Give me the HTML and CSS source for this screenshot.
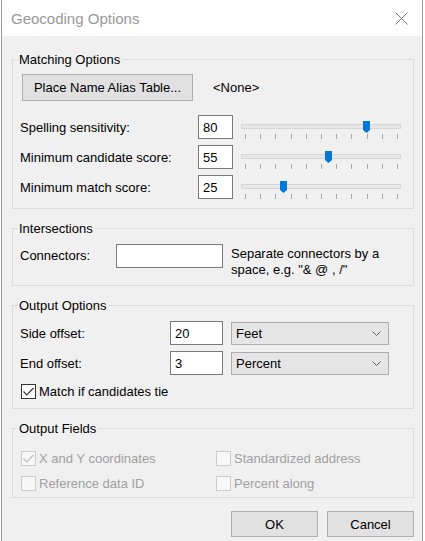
FILE: index.html
```html
<!DOCTYPE html>
<html lang="en">
<head>
  <meta charset="UTF-8" />
  <title>Geocoding Options</title>
  <link rel="stylesheet" href="styles.css">
</head>
<body>

<div class="window">
  <div class="titlebar">
    <span class="title">Geocoding Options</span>
    <svg class="close" width="13" height="13" viewBox="0 0 13 13">
      <path d="M0.5 0.5L12.5 12.5M12.5 0.5L0.5 12.5" stroke="#777" stroke-width="1" fill="none" />
    </svg>
  </div>

  <div class="content">
    <fieldset class="group matching">
      <legend>Matching Options</legend>
      <div class="alias-row">
        <button class="btn alias">Place Name Alias Table...</button>
        <span>&lt;None&gt;</span>
      </div>

      <div class="slider-row">
        <label>Spelling sensitivity:</label>
        <input class="field" type="text" value="80" />
        <div class="slider" data-value="80">
          <div class="track"></div>
          <div class="ticks"></div>
        </div>
      </div>
      <div class="slider-row">
        <label>Minimum candidate score:</label>
        <input class="field" type="text" value="55" />
        <div class="slider" data-value="55">
          <div class="track"></div>
          <div class="ticks"></div>
        </div>
      </div>
      <div class="slider-row">
        <label>Minimum match score:</label>
        <input class="field" type="text" value="25" />
        <div class="slider" data-value="25">
          <div class="track"></div>
          <div class="ticks"></div>
        </div>
      </div>
    </fieldset>

    <fieldset class="group intersections">
      <legend>Intersections</legend>
      <div class="conn-row">
        <label>Connectors:</label>
        <input class="field" type="text" value="" />
        <div class="hint">Separate connectors by a<br>space, e.g. "&amp; @ , /"</div>
      </div>
    </fieldset>

    <fieldset class="group output">
      <legend>Output Options</legend>
      <div class="offset-row">
        <label>Side offset:</label>
        <input class="field" type="text" value="20" />
        <div class="combo"><span>Feet</span><svg width="9" height="5" viewBox="0 0 9 5"><path d="M0.5 0.5L4.5 4.5L8.5 0.5" stroke="#606060" fill="none" /></svg></div>
      </div>
      <div class="offset-row">
        <label>End offset:</label>
        <input class="field" type="text" value="3" />
        <div class="combo"><span>Percent</span><svg width="9" height="5" viewBox="0 0 9 5"><path d="M0.5 0.5L4.5 4.5L8.5 0.5" stroke="#606060" fill="none" /></svg></div>
      </div>
      <div class="check">
        <span class="box checked"><svg width="11" height="9" viewBox="0 0 11 9"><path d="M0.5 4.5L3.8 7.8L10.5 1" stroke="#333" stroke-width="1.2" fill="none" /></svg></span>
        <span>Match if candidates tie</span>
      </div>
    </fieldset>

    <fieldset class="group fields">
      <legend>Output Fields</legend>
      <div class="field-grid">
        <div class="check disabled">
          <span class="box"><svg width="11" height="9" viewBox="0 0 11 9"><path d="M0.5 4.5L3.8 7.8L10.5 1" stroke="#bcbcbc" stroke-width="1.2" fill="none" /></svg></span>
          <span>X and Y coordinates</span>
        </div>
        <div class="check disabled">
          <span class="box"></span>
          <span>Standardized address</span>
        </div>
        <div class="check disabled">
          <span class="box"></span>
          <span>Reference data ID</span>
        </div>
        <div class="check disabled">
          <span class="box"></span>
          <span>Percent along</span>
        </div>
      </div>
    </fieldset>

    <div class="actions">
      <button class="btn">OK</button>
      <button class="btn">Cancel</button>
    </div>
  </div>
</div>

<script>
  // ticks and thumb for each trackbar
  document.querySelectorAll('.slider').forEach(slider => {
    const ticks = slider.querySelector('.ticks');
    for (let i = 0; i <= 10; i++) {
      ticks.appendChild(document.createElement('i'));
    }
    const value = Number(slider.dataset.value);
    const thumb = document.createElementNS('http://www.w3.org/2000/svg', 'svg');
    thumb.setAttribute('class', 'thumb');
    thumb.setAttribute('width', '7');
    thumb.setAttribute('height', '12');
    thumb.setAttribute('viewBox', '0 0 7 12');
    thumb.innerHTML = '<path d="M0 0H7V9L3.5 12L0 9Z" fill="#0078d7" />';
    thumb.style.left = (4.5 + value * 1.515 - 3.5) + 'px';
    slider.appendChild(thumb);
  });
</script>

</body>
</html>
```

FILE: styles.css
```css
html, body {
  margin: 0;
  padding: 0;
  background: #fff;
  font-family: "Liberation Sans", Arial, sans-serif;
  font-size: 13px;
  color: #000;
}

.window {
  width: 420px;
  height: 541px;
  margin-left: 1px;
  border-left: 1px solid #9a9a9a;
  border-right: 1px solid #9a9a9a;
  background: #f0f0f0;
  display: flex;
  flex-direction: column;
}

.titlebar {
  height: 36px;
  background: #fff;
  display: flex;
  align-items: center;
  justify-content: space-between;
  padding: 0 14px 0 9px;
  flex-shrink: 0;
}
.title {
  font-size: 15px;
  color: #999;
  margin-top: 1px;
}
.close { margin-top: 1px; }

.content {
  padding: 0 8px 0 10px;
}

.group {
  margin: 12px 0 0;
  min-width: 0;
  border: 1px solid #dcdcdc;
  padding: 0 11px 9px 7px;
}
.group legend {
  margin-left: -3px;
  padding: 0 2px;
  line-height: 15px;
}
.matching { margin-top: 16px; padding-top: 7px; }

.alias-row {
  display: flex;
  align-items: center;
  gap: 20px;
  margin-left: 2px;
  margin-bottom: 14px;
}

.btn {
  font: inherit;
  color: #000;
  background: #e1e1e1;
  border: 1px solid #adadad;
  height: 26px;
  width: 87px;
  padding: 0;
}
.btn.alias {
  width: 171px;
  height: 27px;
}

.field {
  font: inherit;
  color: #000;
  height: 24px;
  box-sizing: border-box;
  border: 1px solid #7a7a7a;
  background: #fff;
  padding: 0 4px;
  margin: 0;
  width: 100%;
}

.slider-row {
  display: grid;
  grid-template-columns: 170px 35px 160px;
  column-gap: 8px;
  align-items: center;
  height: 24px;
  margin-top: 6px;
}
.slider-row:first-of-type { margin-top: 0; }

.slider {
  position: relative;
  height: 24px;
  align-self: start;
}
.track {
  margin-top: 9px;
  height: 5px;
  box-sizing: border-box;
  background: #e7e7e7;
  border: 1px solid #d6d6d6;
}
.ticks {
  display: flex;
  justify-content: space-between;
  padding: 0 3px 0 4px;
  margin-top: 5px;
  height: 5px;
}
.ticks i {
  width: 1px;
  height: 5px;
  background: #a8a8a8;
}
.thumb {
  position: absolute;
  top: 6px;
}

.intersections { padding-top: 8px; padding-bottom: 7px; }
.conn-row {
  display: grid;
  grid-template-columns: 88px 107px auto;
  column-gap: 8px;
  align-items: start;
}
.conn-row label { line-height: 24px; }
.hint {
  line-height: 16px;
  margin-top: 2px;
}

.output { padding-top: 8px; padding-bottom: 9px; }
.offset-row {
  display: grid;
  grid-template-columns: 142px 53px 158px;
  column-gap: 8px;
  align-items: center;
  height: 24px;
  margin-bottom: 6px;
}
.combo {
  height: 23px;
  box-sizing: border-box;
  background: #e5e5e5;
  border: 1px solid #adadad;
  display: flex;
  align-items: center;
  justify-content: space-between;
  padding: 0 7px 0 4px;
}

.check {
  display: flex;
  align-items: center;
  gap: 3px;
  margin-left: 1px;
  height: 16px;
}
.output .check { margin-top: 8px; }
.box {
  width: 15px;
  height: 15px;
  box-sizing: border-box;
  border: 1px solid #333;
  background: #fff;
  display: flex;
  align-items: center;
  justify-content: center;
}
.disabled { color: #a0a0a0; }
.disabled .box {
  border-color: #cccccc;
  background: #f7f7f7;
}

.fields { padding-top: 14px; padding-bottom: 6px; }
.field-grid {
  display: grid;
  grid-template-columns: 195px auto;
  row-gap: 9px;
}

.actions {
  display: flex;
  justify-content: flex-end;
  gap: 9px;
  margin-top: 13px;
}
```
